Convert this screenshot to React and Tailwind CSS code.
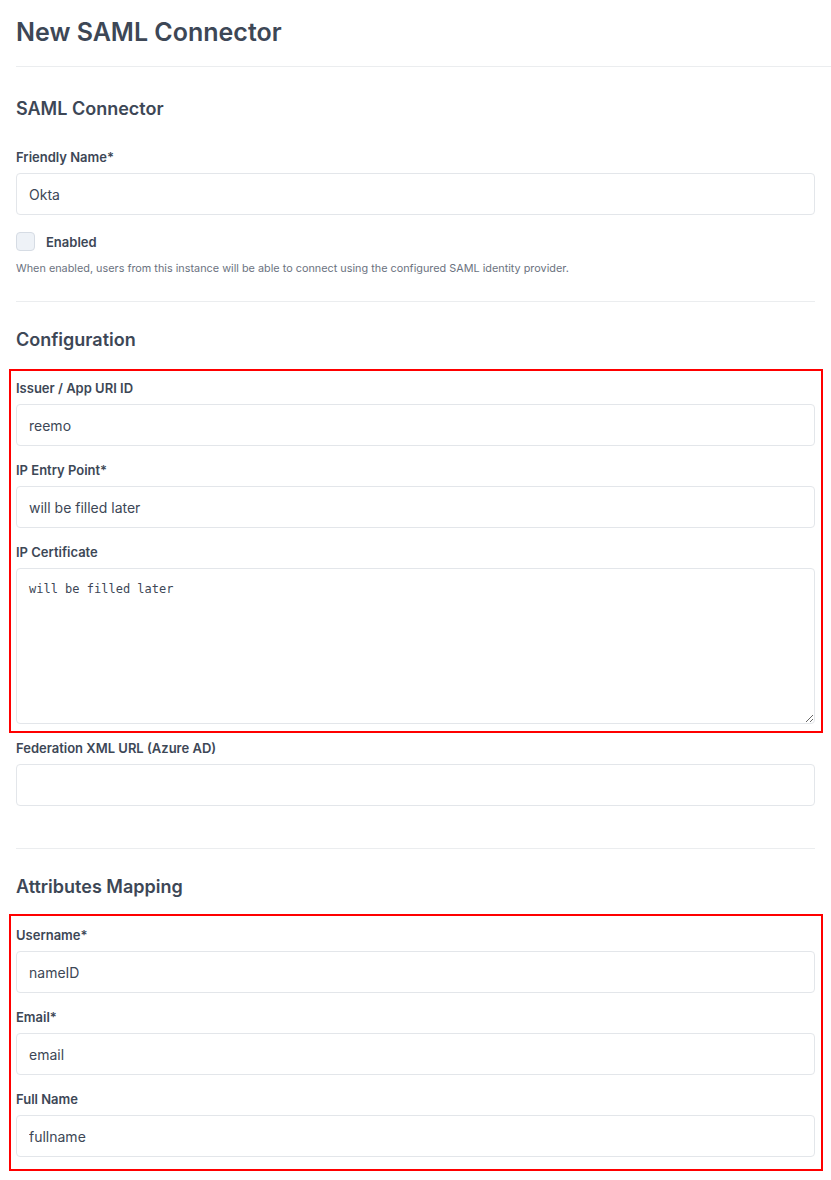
import React from "react";

function Field({ label, value, className = "" }) {
  return (
    <div className={className}>
      <label className="block text-[13px] leading-5 font-semibold text-[#3d4756]">{label}</label>
      <input
        type="text"
        defaultValue={value}
        className="mt-[6px] block w-full h-[42px] rounded-[4px] border border-[#e3e6ea] bg-white pl-[12px] pr-3 text-[14px] text-[#3d4756] outline-none"
      />
    </div>
  );
}

export default function App() {
  return (
    <div className="w-full min-h-[1180px] bg-white text-[#3d4756] font-['Inter','Noto_Sans',sans-serif]">
      <div className="px-4 pt-[14px]">
        <h1 className="text-[25px] leading-9 font-semibold text-[#3d4756]">New SAML Connector</h1>
      </div>
      <div className="ml-4 mt-[16px] border-t border-[#ebedef]" />

      <div className="px-4">
        <h2 className="mt-[28px] text-[18px] leading-7 font-semibold">SAML Connector</h2>
        <Field className="mt-[24px]" label="Friendly Name*" value="Okta" />
        <div className="mt-[16px] flex items-center h-5">
          <span className="block w-[19px] h-[19px] rounded-[4px] border border-[#d6dce4] bg-[#eef2f7]" />
          <span className="ml-[11px] text-[13px] leading-5 font-semibold pt-[1px]">Enabled</span>
        </div>
        <p className="mt-[9px] text-[10.85px] leading-4 text-[#6b7280]">
          When enabled, users from this instance will be able to connect using the configured SAML identity provider.
        </p>
        <div className="mt-[25px] border-t border-[#ebedef]" />

        <h2 className="mt-[24px] text-[18px] leading-7 font-semibold">Configuration</h2>
        <div className="relative mt-[24px]">
          <Field label="Issuer / App URI ID" value="reemo" />
          <Field className="mt-[14px]" label="IP Entry Point*" value="will be filled later" />
          <div className="mt-[14px]">
            <label className="block text-[13px] leading-5 font-semibold">IP Certificate</label>
            <textarea
              defaultValue="will be filled later"
              className="mt-[6px] block w-full h-[156px] rounded-[4px] border border-[#e3e6ea] bg-white px-[12px] pt-[10px] text-[12px] leading-5 text-[#3d4756] outline-none font-['DejaVu_Sans_Mono',monospace]"
            />
          </div>
          <div className="pointer-events-none absolute top-[-9px] bottom-[-9px] left-[-7px] right-[-8px] border-2 border-[#ff0000]" />
        </div>
        <Field className="mt-[14px]" label="Federation XML URL (Azure AD)" value="" />
        <div className="mt-[42px] border-t border-[#ebedef]" />

        <h2 className="mt-[24px] text-[18px] leading-7 font-semibold">Attributes Mapping</h2>
        <div className="relative mt-[24px]">
          <Field label="Username*" value="nameID" />
          <Field className="mt-[14px]" label="Email*" value="email" />
          <Field className="mt-[14px]" label="Full Name" value="fullname" />
          <div className="pointer-events-none absolute top-[-11px] bottom-[-14px] left-[-7px] right-[-8px] border-2 border-[#ff0000]" />
        </div>
      </div>
    </div>
  );
}
